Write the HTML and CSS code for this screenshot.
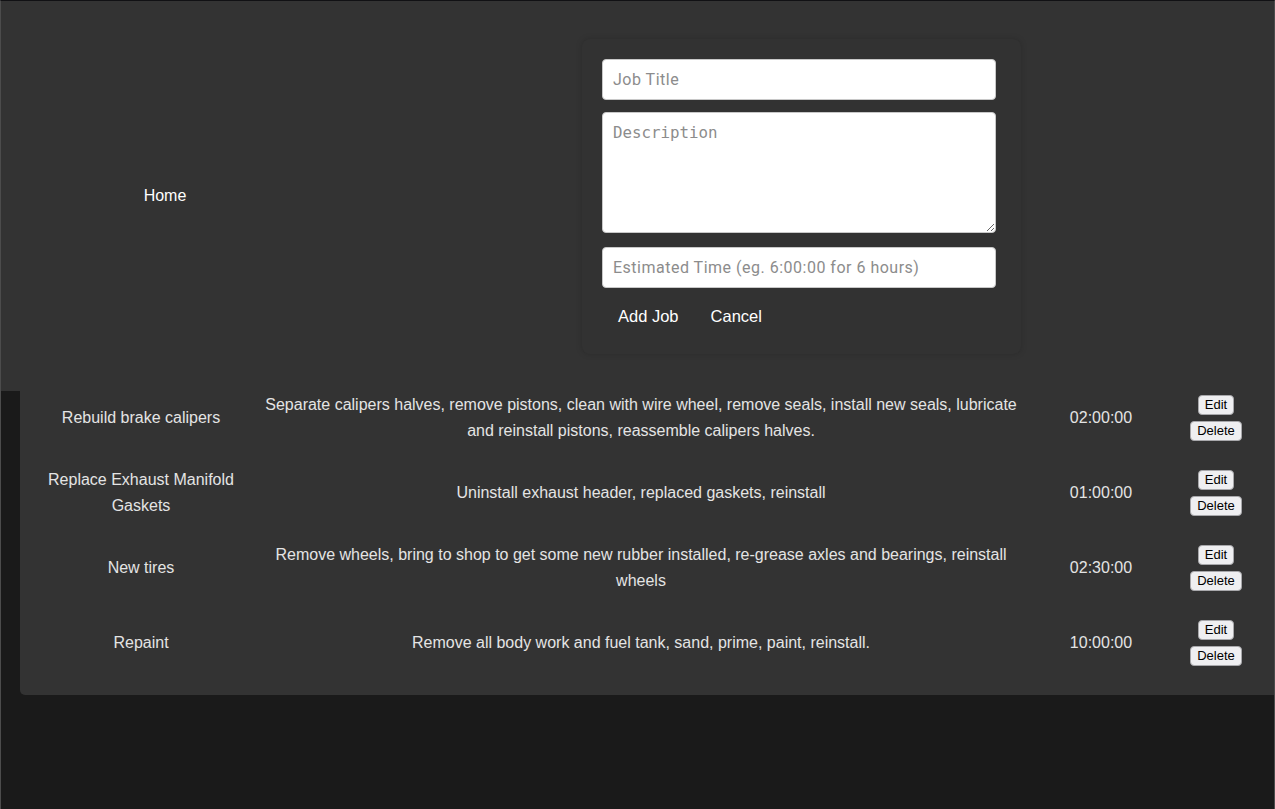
FILE: index.html
```html
<!DOCTYPE html>
<html lang="en">
<head>
<meta charset="utf-8">
<title>Jobs</title>
<link rel="stylesheet" href="styles.css">
</head>
<body>
<div class="frame">
  <header class="header">
    <nav class="nav"><a class="nav-link">Home</a></nav>
    <form class="panel">
      <input class="field" type="text" placeholder="Job Title">
      <textarea class="field area" placeholder="Description"></textarea>
      <input class="field time" type="text" placeholder="Estimated Time (eg. 6:00:00 for 6 hours)">
      <div class="actions">
        <button type="button" class="link-btn">Add Job</button>
        <button type="button" class="link-btn">Cancel</button>
      </div>
    </form>
  </header>
  <section class="card">
    <table class="jobs">
      <colgroup>
        <col class="c-title"><col class="c-desc"><col class="c-time"><col class="c-act">
      </colgroup>
      <tbody>
        <tr>
          <td>Rebuild brake calipers</td>
          <td>Separate calipers halves, remove pistons, clean with wire wheel, remove seals, install new seals, lubricate and reinstall pistons, reassemble calipers halves.</td>
          <td>02:00:00</td>
          <td><div class="btns"><button class="mini">Edit</button><button class="mini">Delete</button></div></td>
        </tr>
        <tr>
          <td>Replace Exhaust Manifold Gaskets</td>
          <td>Uninstall exhaust header, replaced gaskets, reinstall</td>
          <td>01:00:00</td>
          <td><div class="btns"><button class="mini">Edit</button><button class="mini">Delete</button></div></td>
        </tr>
        <tr>
          <td>New tires</td>
          <td>Remove wheels, bring to shop to get some new rubber installed, re-grease axles and bearings, reinstall wheels</td>
          <td>02:30:00</td>
          <td><div class="btns"><button class="mini">Edit</button><button class="mini">Delete</button></div></td>
        </tr>
        <tr>
          <td>Repaint</td>
          <td>Remove all body work and fuel tank, sand, prime, paint, reinstall.</td>
          <td>10:00:00</td>
          <td><div class="btns"><button class="mini">Edit</button><button class="mini">Delete</button></div></td>
        </tr>
      </tbody>
    </table>
  </section>
</div>
</body>
</html>
```
FILE: styles.css
```css
* { box-sizing: border-box; }
html, body {
  margin: 0;
  padding: 0;
  background: #1a1a1a;
}
body {
  font-family: "Liberation Sans", Arial, sans-serif;
  font-size: 16px;
}
.frame {
  height: 809px;
  border-top: 1px solid #111114;
  border-left: 1px solid #4c4c4c;
  border-right: 1px solid #4c4c4c;
  overflow: hidden;
  background: #1a1a1a;
}
.header {
  height: 390px;
  background: #333333;
  display: flex;
  align-items: center;
}
.nav {
  width: 328px;
  text-align: center;
}
.nav-link {
  color: #ffffff;
  font-size: 16px;
  text-decoration: none;
}
.panel {
  margin: 0 0 0 253px;
  width: 439px;
  padding: 20px 25px 20px 20px;
  background: #323232;
  border-radius: 8px;
  box-shadow: 0 0 6px rgba(0, 0, 0, 0.18);
  display: flex;
  flex-direction: column;
}
.field {
  display: block;
  width: 394px;
  height: 41px;
  margin: 0;
  padding: 0 10px;
  border: 1px solid #c8c8c8;
  border-radius: 4px;
  background: #ffffff;
  font-family: Roboto, "Liberation Sans", sans-serif;
  font-size: 16px;
  letter-spacing: 0.5px;
  color: #222;
  outline: none;
}
.field::placeholder { color: #8c8c8c; }
.area {
  height: 121px;
  margin-top: 12px;
  padding: 10px;
  font-family: "DejaVu Sans Mono", monospace;
  font-size: 15.8px;
  letter-spacing: 0;
  line-height: 19px;
  resize: vertical;
}
.time { margin-top: 14px; }
.actions {
  display: flex;
  margin-top: 10px;
}
.link-btn {
  background: transparent;
  border: 0;
  color: #ffffff;
  font-family: "Liberation Sans", Arial, sans-serif;
  font-size: 16.5px;
  line-height: 20px;
  padding: 8px 16px;
  cursor: pointer;
}
.card {
  margin: -11px 0 0 19px;
  width: 1280px;
  padding-bottom: 15px;
  background: #333333;
  border-radius: 0 0 0 5px;
  position: relative;
}
.jobs {
  border-collapse: collapse;
  table-layout: fixed;
  width: 1230px;
  color: #e4e4e4;
  font-size: 16px;
  line-height: 26px;
}
.c-title { width: 242px; }
.c-desc { width: 758px; }
.c-time { width: 162px; }
.c-act { width: 68px; }
.jobs td {
  height: 75px;
  padding: 0;
  text-align: center;
  vertical-align: middle;
}
.jobs td:first-child { padding: 0 22px; }
.jobs td:nth-child(2) { padding: 0; }
.btns {
  display: flex;
  flex-direction: column;
  align-items: center;
  gap: 6px;
}
.mini {
  font-family: "Liberation Sans", Arial, sans-serif;
  font-size: 13px;
  line-height: 16px;
  padding: 1px 6px;
  color: #000;
  background: #efeff1;
  border: 1px solid #a8a8ab;
  border-radius: 4px;
}
```
